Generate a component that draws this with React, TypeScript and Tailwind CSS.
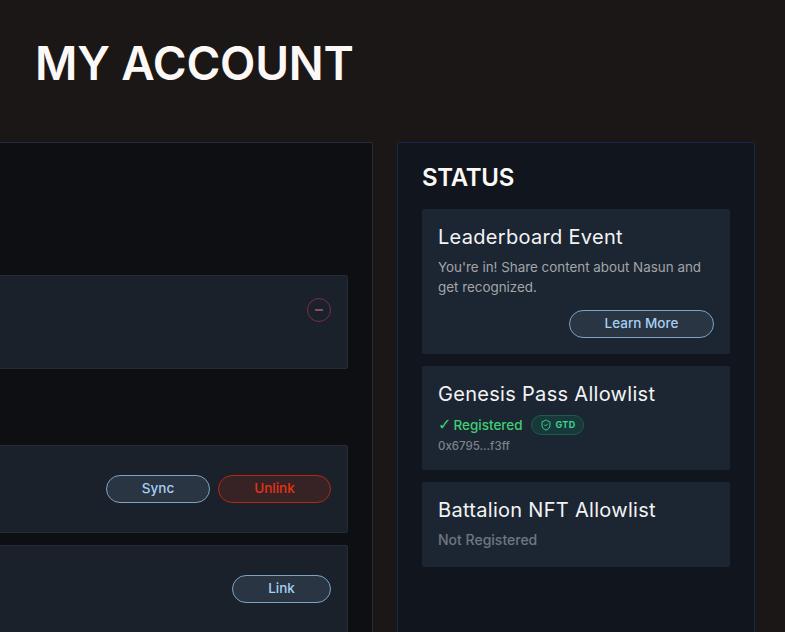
import { ShieldCheck } from "lucide-react";

const font = { fontFamily: "Inter, 'Noto Sans', sans-serif" };

function PillButton({ label, width, danger }: { label: string; width: string; danger?: boolean }) {
  return (
    <button
      className={`${width} h-[28px] rounded-full border text-[13.5px] leading-none font-medium ${
        danger ? "border-[#b22a10] bg-[#372226] text-[#e5330f]" : "border-[#7ea3c2] bg-[#2a3543] text-[#a5d0f2]"
      }`}
    >
      {label}
    </button>
  );
}

function StatusCard({ title, children }: { title: string; children: React.ReactNode }) {
  return (
    <div className="rounded-[2px] bg-[#1c2633] px-4 pt-4 pb-4">
      <h3 className="text-[20px] leading-[24px] tracking-[0.3px] text-[#f3f3f3]">{title}</h3>
      {children}
    </div>
  );
}

export default function App() {
  return (
    <div style={font} className="h-[632px] w-[785px] overflow-hidden bg-[#1b1716]">
      <header className="h-[142px] pl-[35px] pt-[32px]">
        <h1 className="text-[46px] leading-[62px] font-semibold tracking-[-0.2px] text-[#fcf8f5]">MY ACCOUNT</h1>
      </header>

      <div className="flex justify-end gap-[24px] pr-[30px]">
        {/* Account panel, runs off the left and bottom of the window */}
        <section className="h-[600px] w-[420px] shrink-0 rounded-[2px] border border-[#262c38] bg-[#0d0f13] pt-[132px] pr-6">
          <div className="flex h-[94px] items-start justify-end rounded-[2px] border border-[#262c36] bg-[#1a212b] pt-[22px] pr-4">
            <div className="flex h-6 w-6 items-center justify-center rounded-full border border-[#7a2f40]">
              <span className="h-[2px] w-2 bg-[#8f4a57]" />
            </div>
          </div>
          <div className="mt-[76px] flex h-[88px] items-center justify-end gap-2 rounded-[2px] border border-[#262c36] bg-[#1a212b] pr-4">
            <PillButton label="Sync" width="w-[104px]" />
            <PillButton label="Unlink" width="w-[113px]" danger />
          </div>
          <div className="mt-3 flex h-[88px] items-center justify-end rounded-[2px] border border-[#262c36] bg-[#1a212b] pr-4">
            <PillButton label="Link" width="w-[99px]" />
          </div>
        </section>

        {/* Status panel */}
        <section className="h-[600px] w-[358px] shrink-0 rounded-[2px] border border-[#15284a] bg-[#10151e] px-6 pt-5">
          <h2 className="text-[24px] leading-[30px] font-semibold tracking-[-0.3px] text-[#fcf8f5]">STATUS</h2>
          <div className="mt-4 flex flex-col gap-3">
            <StatusCard title="Leaderboard Event">
              <p className="mt-2 text-[13.4px] leading-[20px] text-[#a3a5a8]">
                You're in! Share content about Nasun and get recognized.
              </p>
              <div className="mt-[13px] flex justify-end">
                <PillButton label="Learn More" width="w-[145px]" />
              </div>
            </StatusCard>
            <StatusCard title="Genesis Pass Allowlist">
              <div className="mt-[9px] flex items-center gap-2">
                <span className="flex items-center gap-[2px] text-[13.5px] leading-[20px] font-medium text-[#3ecf74]">
                  <span className="text-[16px]" style={{ fontFamily: "'DejaVu Sans', sans-serif" }}>✓</span>
                  Registered
                </span>
                <span className="flex h-[20px] items-center gap-1 rounded-full border border-[#1f5a4c] bg-[#17393a] px-2 text-[9px] font-bold tracking-[0.3px] text-[#3ecf8e]">
                  <ShieldCheck size={12} />
                  GTD
                </span>
              </div>
              <p className="mt-[3px] text-[11.5px] leading-[16px] font-medium text-[#7d8289]">0x6795...f3ff</p>
            </StatusCard>
            <StatusCard title="Battalion NFT Allowlist">
              <p className="mt-2 pb-px text-[14px] leading-[20px] font-medium text-[#6f7680]">Not Registered</p>
            </StatusCard>
          </div>
        </section>
      </div>
    </div>
  );
}
